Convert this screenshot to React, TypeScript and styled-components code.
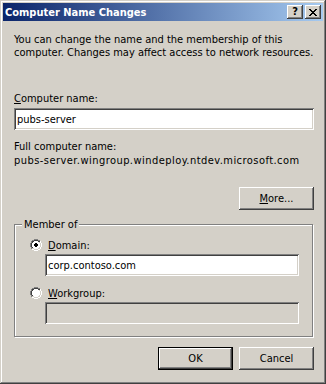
import React from "react";
import styled, { createGlobalStyle } from "styled-components";

const FACE = "#D4D0C8";
const SHADOW = "#808080";
const DARK = "#404040";
const FONT = `"DejaVu Sans Condensed", "Liberation Sans", Arial, sans-serif`;

const Global = createGlobalStyle`
  html, body { margin: 0; padding: 0; background: ${FACE}; }
  * { box-sizing: border-box; }
  body { font-family: ${FONT}; font-size: 11px; color: #000; }
`;

const Window = styled.div`
  width: 326px;
  height: 384px;
  padding: 3px;
  background: ${FACE};
  display: flex;
  flex-direction: column;
  box-shadow: inset -1px -1px 0 ${DARK}, inset 1px 1px 0 ${FACE},
    inset -2px -2px 0 ${SHADOW}, inset 2px 2px 0 #fff;
`;

const TitleBar = styled.div`
  height: 18px;
  flex: none;
  display: flex;
  align-items: center;
  padding: 0 2px;
  background: linear-gradient(to right, #0a246a, #a6caf0);
  color: #fff;
  font-weight: bold;
  font-size: 11px;
  line-height: 13px;
`;

const TitleText = styled.span`
  flex: 1;
  white-space: nowrap;
`;

const CaptionButtons = styled.div`
  display: flex;
  gap: 2px;
`;

const CaptionButton = styled.div`
  width: 16px;
  height: 14px;
  background: ${FACE};
  display: flex;
  align-items: center;
  justify-content: center;
  color: #000;
  font-weight: bold;
  font-size: 11px;
  line-height: 14px;
  box-shadow: inset -1px -1px 0 ${DARK}, inset 1px 1px 0 #fff,
    inset -2px -2px 0 ${SHADOW}, inset 2px 2px 0 ${FACE};
`;

const Body = styled.div`
  flex: 1;
  display: flex;
  flex-direction: column;
  padding: 12px 9px 0 11px;
  line-height: 13px;
`;

const Para = styled.p`
  margin: 0;
`;

const Label = styled.div<{ $mt?: number; $spacing?: number }>`
  margin-top: ${(p) => p.$mt ?? 0}px;
  letter-spacing: ${(p) => p.$spacing ?? 0}px;
  white-space: nowrap;
`;

const Edit = styled.div<{ $mt?: number; $disabled?: boolean; $width?: number }>`
  margin-top: ${(p) => p.$mt ?? 0}px;
  width: ${(p) => (p.$width ? `${p.$width}px` : "100%")};
  height: 22px;
  padding: 0 3px;
  display: flex;
  align-items: center;
  background: ${(p) => (p.$disabled ? FACE : "#fff")};
  box-shadow: inset 1px 1px 0 ${SHADOW}, inset -1px -1px 0 #fff,
    inset 2px 2px 0 ${DARK}, inset -2px -2px 0 ${FACE};
  white-space: nowrap;
`;

const ButtonRow = styled.div<{ $mt: number }>`
  margin-top: ${(p) => p.$mt}px;
  display: flex;
  justify-content: flex-end;
  gap: 6px;
`;

const Button = styled.div<{ $default?: boolean }>`
  width: 75px;
  height: 23px;
  display: flex;
  align-items: center;
  justify-content: center;
  background: ${FACE};
  box-shadow: ${(p) =>
    p.$default
      ? `inset 0 0 0 1px #000, inset -2px -2px 0 ${DARK}, inset 2px 2px 0 #fff, inset -3px -3px 0 ${SHADOW}`
      : `inset -1px -1px 0 ${DARK}, inset 1px 1px 0 #fff, inset -2px -2px 0 ${SHADOW}`};
`;

const U = styled.span`
  text-decoration: underline;
`;

const Group = styled.fieldset`
  margin: 8px 0 0 0;
  width: 299px;
  padding: 0 0 12px 0;
  border: 1px solid ${SHADOW};
  box-shadow: inset 1px 1px 0 #fff, 1px 1px 0 #fff;
  min-width: 0;
`;

const Legend = styled.legend`
  margin-left: 7px;
  padding: 0 2px;
  background: ${FACE};
  line-height: 13px;
`;

const GroupInner = styled.div`
  padding: 8px 0 0 15px;
  display: flex;
  flex-direction: column;
`;

const RadioRow = styled.div<{ $mt?: number }>`
  margin-top: ${(p) => p.$mt ?? 0}px;
  display: flex;
  align-items: flex-start;
  gap: 6px;
  height: 13px;
`;

const Indented = styled.div`
  padding-left: 15px;
`;

const RADIO_MAP = [
  "....GGGG....",
  "..GGDDDDGG..",
  ".GDDWWWWDDH.",
  ".GDWWWWWWLH.",
  "GDWWWWWWWWLH",
  "GDWWWWWWWWLH",
  "GDWWWWWWWWLH",
  "GDWWWWWWWWLH",
  ".GDWWWWWWLH.",
  ".GLLWWWWLLH.",
  "..HHLLLLHH..",
  "....HHHH....",
];
const DOT_MAP = [
  "............",
  "............",
  "............",
  "............",
  ".....KK.....",
  "....KKKK....",
  "....KKKK....",
  ".....KK.....",
  "............",
  "............",
  "............",
  "............",
];
const COLORS: Record<string, string> = {
  G: SHADOW,
  D: DARK,
  W: "#fff",
  H: "#fff",
  L: FACE,
  K: "#000",
};

function PixelArt({ maps, w, h }: { maps: string[][]; w: number; h: number }) {
  const rects: React.ReactNode[] = [];
  maps.forEach((map, mi) =>
    map.forEach((row, y) =>
      row.split("").forEach((c, x) => {
        if (COLORS[c]) {
          rects.push(
            <rect key={`${mi}-${x}-${y}`} x={x} y={y} width={1} height={1} fill={COLORS[c]} />
          );
        }
      })
    )
  );
  return (
    <svg width={w} height={h} viewBox={`0 0 ${w} ${h}`} shapeRendering="crispEdges" style={{ flex: "none" }}>
      {rects}
    </svg>
  );
}

const Radio = ({ checked }: { checked?: boolean }) => (
  <PixelArt maps={checked ? [RADIO_MAP, DOT_MAP] : [RADIO_MAP]} w={12} h={12} />
);

const CLOSE_MAP = [
  "KK....KK",
  ".KK..KK.",
  "..KKKK..",
  "...KK...",
  "..KKKK..",
  ".KK..KK.",
  "KK....KK",
];

export default function App() {
  return (
    <>
      <Global />
      <Window>
        <TitleBar>
          <TitleText>Computer Name Changes</TitleText>
          <CaptionButtons>
            <CaptionButton>?</CaptionButton>
            <CaptionButton>
              <PixelArt maps={[CLOSE_MAP]} w={8} h={7} />
            </CaptionButton>
          </CaptionButtons>
        </TitleBar>
        <Body>
          <Para>
            You can change the name and the membership of this
            <br />
            computer. Changes may affect access to network resources.
          </Para>
          <Label $mt={33}>
            <U>C</U>omputer name:
          </Label>
          <Edit $mt={3}>pubs-server</Edit>
          <Label $mt={10}>Full computer name:</Label>
          <Label $mt={1} $spacing={0.45}>
            pubs-server.wingroup.windeploy.ntdev.microsoft.com
          </Label>
          <ButtonRow $mt={20}>
            <Button>
              <span>
                <U>M</U>ore...
              </span>
            </Button>
          </ButtonRow>
          <Group>
            <Legend>Member of</Legend>
            <GroupInner>
              <RadioRow>
                <Radio checked />
                <span>
                  <U>D</U>omain:
                </span>
              </RadioRow>
              <Indented>
                <Edit $mt={2} $width={254}>corp.contoso.com</Edit>
              </Indented>
              <RadioRow $mt={11}>
                <Radio />
                <span>
                  <U>W</U>orkgroup:
                </span>
              </RadioRow>
              <Indented>
                <Edit $mt={2} $width={254} $disabled />
              </Indented>
            </GroupInner>
          </Group>
          <ButtonRow $mt={10}>
            <Button $default>OK</Button>
            <Button>Cancel</Button>
          </ButtonRow>
        </Body>
      </Window>
    </>
  );
}
